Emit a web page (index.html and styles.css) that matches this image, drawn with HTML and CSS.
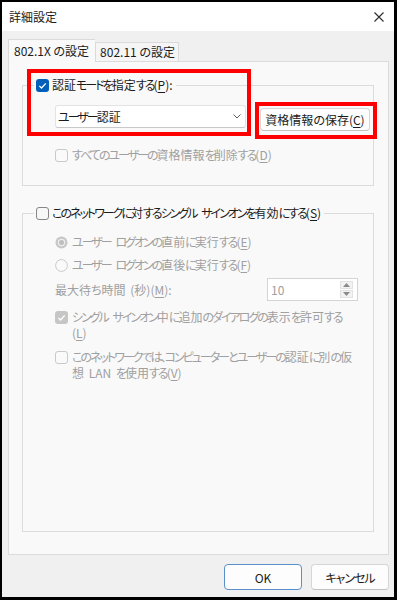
FILE: index.html
```html
<!DOCTYPE html>
<html lang="ja">
  <head>
    <meta charset="UTF-8">
    <meta name="viewport" content="width=device-width, initial-scale=1">
    <title>詳細設定</title>
    <link rel="stylesheet" href="styles.css">
  </head>
  <body>

<div class="window">
  <div class="titlebar">
    <span class="title">詳細設定</span>
    <svg class="close" width="10" height="10" viewBox="0 0 10 10"><path d="M0.5 0.5 9.5 9.5 M9.5 0.5 0.5 9.5" stroke="#2b2b2b" stroke-width="1.1" fill="none"/></svg>
  </div>

  <div class="tabs">
    <div class="tab active">802.1X の設定</div>
    <div class="tab">802.11 の設定</div>
  </div>

  <div class="panel">
    <fieldset class="group group-auth">
      <legend>
        <label class="check">
          <span class="box on"><svg width="13" height="13" viewBox="0 0 13 13"><path d="M3.3 6.9 5.5 9 9.8 4.4" stroke="#fff" stroke-width="1.3" fill="none"/></svg></span>
          <span>認証<span class="kana">モードを</span>指定<span class="kana">する</span>(<u>P</u>):</span>
        </label>
      </legend>
      <div class="group-body">
        <div class="auth-row">
          <div class="select">
            <span><span class="kana">ユーザー</span>認証</span>
            <svg class="chevron" width="8" height="5" viewBox="0 0 8 5"><path d="M0.5 0.5 4 4 7.5 0.5" stroke="#5c5c5c" stroke-width="1" fill="none"/></svg>
          </div>
          <button class="btn save">資格情報の保存(<u>C</u>)</button>
        </div>
        <label class="check disabled wipe">
          <span class="box"></span>
          <span><span class="kana">すべてのユーザーの</span>資格情報<span class="kana">を</span>削除<span class="kana">する</span>(<u>D</u>)</span>
        </label>
      </div>
    </fieldset>

    <fieldset class="group group-sso">
      <legend>
        <label class="check">
          <span class="box enabled"></span>
          <span><span class="kana">このネットワークに</span>対<span class="kana">するシングル</span> <span class="kana">サインオンを</span>有効<span class="kana">にする</span>(<u>S</u>)</span>
        </label>
      </legend>
      <div class="group-body">
        <label class="check disabled">
          <svg class="radio" width="13" height="13" viewBox="0 0 13 13"><circle cx="6.5" cy="6.5" r="6" fill="#c7c7c7"/><circle cx="6.5" cy="6.5" r="3.7" fill="#ededed"/><circle cx="6.5" cy="6.5" r="2.5" fill="#bdbdbd"/></svg>
          <span><span class="kana">ユーザー</span> <span class="kana">ログオンの</span>直前<span class="kana">に</span>実行<span class="kana">する</span>(<u>E</u>)</span>
        </label>
        <label class="check disabled after">
          <svg class="radio" width="13" height="13" viewBox="0 0 13 13"><circle cx="6.5" cy="6.5" r="5.9" fill="#fafafa" stroke="#c9c9c9" stroke-width="1"/></svg>
          <span><span class="kana">ユーザー</span> <span class="kana">ログオンの</span>直後<span class="kana">に</span>実行<span class="kana">する</span>(<u>F</u>)</span>
        </label>
        <div class="wait-row disabled">
          <span>最大待ち時間 (秒)(<u>M</u>):</span>
          <div class="spin">
            <span>10</span>
            <span class="spin-arrows">
              <span class="arrow"><svg width="7" height="4" viewBox="0 0 7 4"><path d="M0 4 3.5 0 7 4Z" fill="#8a8a8a"/></svg></span>
              <span class="arrow"><svg width="7" height="4" viewBox="0 0 7 4"><path d="M0 0 3.5 4 7 0Z" fill="#8a8a8a"/></svg></span>
            </span>
          </div>
        </div>
        <label class="check disabled dialog">
          <span class="box on"><svg width="13" height="13" viewBox="0 0 13 13"><path d="M3.3 6.9 5.5 9 9.8 4.4" stroke="#fff" stroke-width="1.3" fill="none"/></svg></span>
          <span><span class="kana">シングル</span> <span class="kana">サインオン</span>中<span class="kana">に</span>追加<span class="kana">のダイアログの</span>表示<span class="kana">を</span>許可<span class="kana">する</span><br>(<u>L</u>)</span>
        </label>
        <label class="check disabled vlan">
          <span class="box"></span>
          <span><span class="kana">このネットワークでは、コンピューターとユーザーの</span>認証<span class="kana">に</span>別<span class="kana">の</span>仮<br>想 LAN <span class="kana">を</span>使用<span class="kana">する</span>(<u>V</u>)</span>
        </label>
      </div>
    </fieldset>
  </div>

  <div class="actions">
    <button class="btn ok">OK</button>
    <button class="btn"><span class="kana">キャンセル</span></button>
  </div>

  <div class="mark mark-mode"></div>
  <div class="mark mark-save"></div>
</div>

  </body>
</html>
```

FILE: styles.css
```css
*, ::before, ::after { box-sizing: border-box; }
html {
  font-family: "Noto Sans CJK JP", sans-serif;
  font-size: 12px;
  font-feature-settings: "palt";
  word-spacing: 2px;
}
body {
  margin: 0;
  background: #000;
}
u { text-underline-offset: 2px; }

/* かなは UI フォントに合わせて詰める */
.kana { letter-spacing: -2px; }
.btn .kana { letter-spacing: -1px; }

.window {
  position: relative;
  display: flex;
  flex-direction: column;
  width: 392px;
  height: 595px;
  margin: 2px 0 0 2px;
  background: #f0f0f0;
  color: #1b1b1b;
}

/* タイトルバー */
.titlebar {
  flex: none;
  display: flex;
  align-items: center;
  justify-content: space-between;
  height: 29px;
  padding: 0 10px 0 7px;
  background: #fff;
}
.title { line-height: 16px; }

/* タブ */
.tabs {
  flex: none;
  display: flex;
  align-items: flex-end;
  height: 30px;
  padding-left: 6px;
}
.tab {
  height: 19px;
  padding: 0 3px 0 4px;
  line-height: 18px;
  background: #f5f5f5;
  border: 1px solid #dadada;
  border-bottom: none;
  white-space: nowrap;
  word-spacing: 0;
}
.tab.active {
  position: relative;
  z-index: 1;
  height: 23px;
  margin-bottom: -1px;
  padding: 0 6px 0 5px;
  line-height: 21px;
  background: #f9f9f9;
  border-right: none;
}

.panel {
  flex: none;
  display: flex;
  flex-direction: column;
  width: 381px;
  height: 494px;
  margin-left: 6px;
  padding: 0 14px 22px 13px;
  background: #f9f9f9;
  border: 1px solid #dcdcdc;
}

/* グループ枠 */
.group {
  min-width: 0;
  margin: 15px 0 0;
  padding: 0;
  border: 1px solid #dcdcdc;
}
.group legend {
  margin-left: 11px;
  padding: 0 3px 0 2px;
  line-height: 16px;
}
.group-sso {
  flex: 1;
  margin-top: 19px;
}
.group-auth .group-body { padding: 12px 2px 22px 32px; }
.group-sso .group-body { padding: 13px 15px 0 32px; }

/* チェックボックス・ラジオ */
.check {
  display: flex;
  align-items: flex-start;
  gap: 4px;
  line-height: 16px;
  white-space: nowrap;
}
legend .check { gap: 3px; }
.box, .radio {
  flex: none;
  width: 13px;
  height: 13px;
  margin-top: 2px;
}
.box {
  display: block;
  border: 1px solid #c9c9c9;
  border-radius: 3px;
  background: #fafafa;
}
.box.enabled {
  border-color: #878787;
  background: #f7f7f7;
}
.box.on {
  border: none;
  background: #005fb8;
}
.box svg { display: block; }
.disabled { color: #a0a0a0; }
.disabled .box.on { background: #c6c6c6; }

.wipe { margin-top: 16px; }
.after { margin-top: 7px; }
.dialog, .vlan { margin-top: 8px; }

/* 認証モード */
.auth-row {
  display: flex;
  align-items: flex-start;
}
.select {
  display: flex;
  align-items: center;
  justify-content: space-between;
  width: 191px;
  height: 23px;
  padding: 0 4px 0 2px;
  background: #fff;
  border: 1px solid #e3e3e3;
  border-bottom-color: #c8c8c8;
  border-radius: 3px;
}

.btn {
  height: 23px;
  padding: 0;
  font: inherit;
  color: #1b1b1b;
  background: #fdfdfd;
  border: 1px solid #d6d6d6;
  border-bottom-color: #c2c2c2;
  border-radius: 4px;
  white-space: nowrap;
}
.btn.save {
  width: 110px;
  margin: 3px 0 0 14px;
}

/* 待ち時間 */
.wait-row {
  display: flex;
  align-items: center;
  justify-content: space-between;
  margin-top: 5px;
}
.spin {
  display: flex;
  align-items: center;
  justify-content: space-between;
  width: 91px;
  height: 23px;
  padding: 0 4px 0 3px;
  background: #fff;
  border: 1px solid #d4d4d4;
}
.spin-arrows {
  display: flex;
  flex-direction: column;
  gap: 1px;
}
.arrow {
  display: flex;
  align-items: center;
  justify-content: center;
  width: 13px;
  height: 8px;
  background: #f2f2f2;
  border: 1px solid #e2e2e2;
}
.arrow svg { display: block; }

/* ボタン */
.actions {
  flex: none;
  display: flex;
  justify-content: flex-end;
  gap: 9px;
  padding: 9px 5px 0 0;
}
.actions .btn {
  width: 78px;
  height: 26px;
}
.btn.ok { border-color: #5b8fcb; }

/* 注記の赤枠 */
.mark {
  position: absolute;
  border: 4px solid #f00;
}
.mark-mode {
  left: 25px;
  top: 67px;
  width: 224px;
  height: 67px;
}
.mark-save {
  left: 253px;
  top: 100px;
  width: 122px;
  height: 37px;
}
```
